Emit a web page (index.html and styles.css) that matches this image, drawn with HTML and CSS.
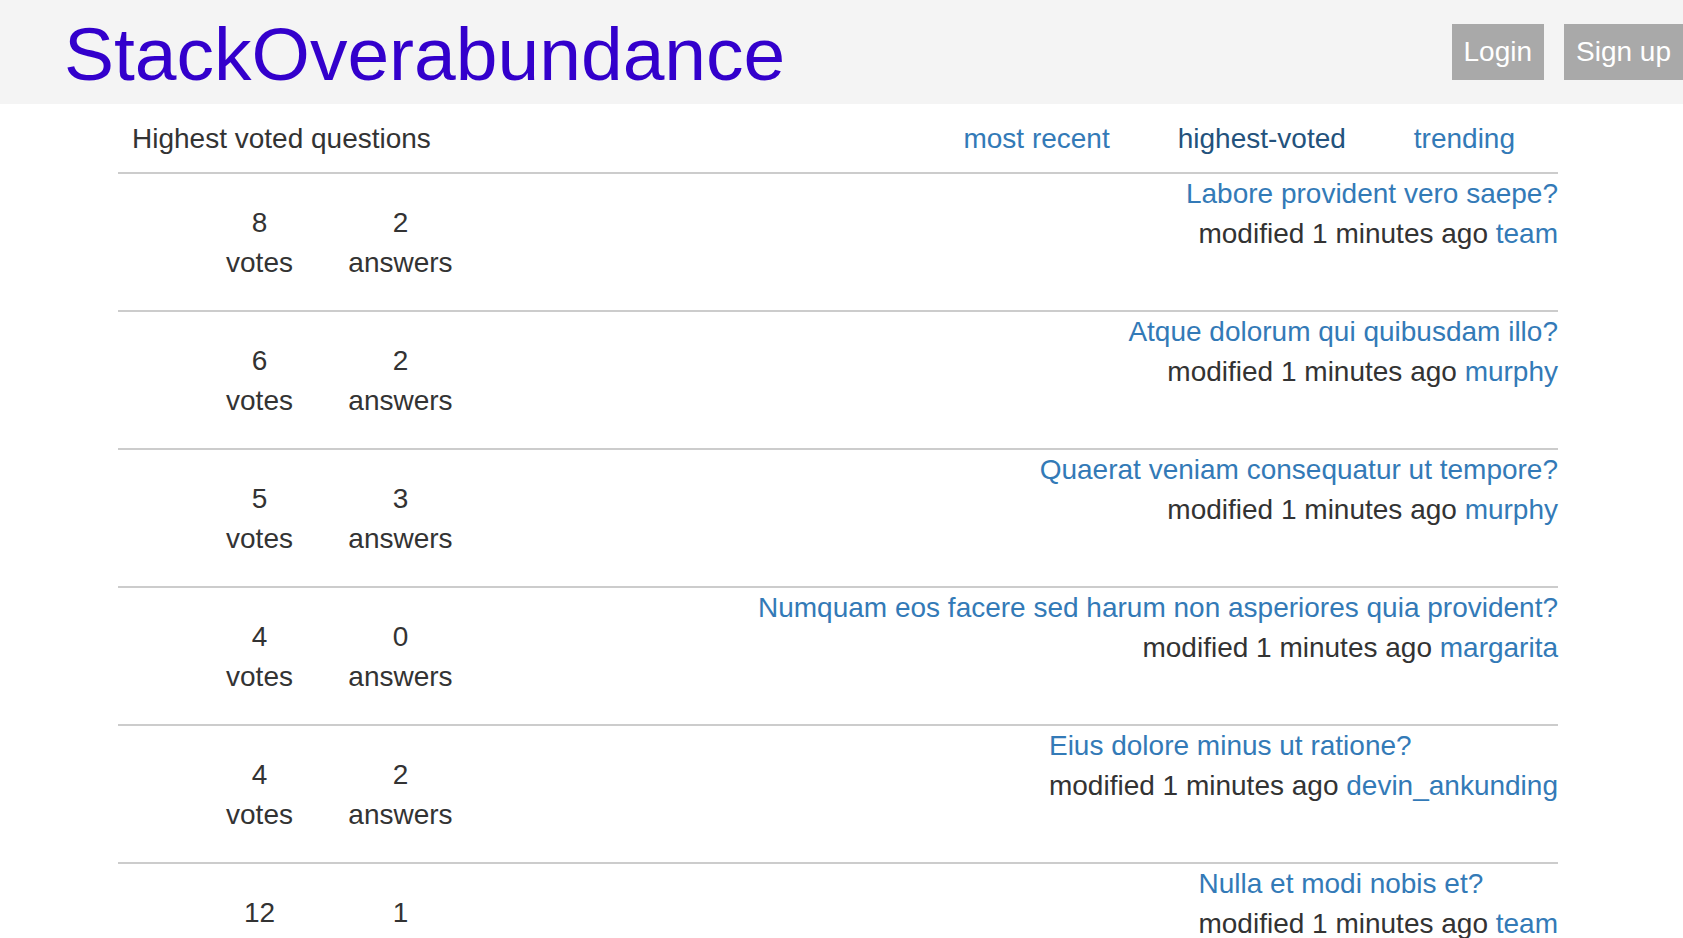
FILE: index.html
```html
<!DOCTYPE html>
<html lang="en">
<head>
<meta charset="utf-8">
<title>StackOverabundance</title>
<link rel="stylesheet" href="styles.css">
</head>
<body>
<header class="topbar">
  <a class="logo" href="#">StackOverabundance</a>
  <div class="auth">
    <a class="btn" href="#">Login</a>
    <a class="btn" href="#">Sign up</a>
  </div>
</header>
<main class="container">
  <div class="subnav">
    <h2 class="subnav-title">Highest voted questions</h2>
    <nav class="tabs">
      <a class="tab" href="#">most recent</a>
      <a class="tab tab-active" href="#">highest-voted</a>
      <a class="tab" href="#">trending</a>
    </nav>
  </div>

  <div class="question">
    <div class="stats">
      <div class="stat"><div>8</div><div>votes</div></div>
      <div class="stat"><div>2</div><div>answers</div></div>
    </div>
    <div class="summary">
      <a class="q-title" href="#">Labore provident vero saepe?</a>
      <div class="meta">modified 1 minutes ago <a href="#">team</a></div>
    </div>
  </div>

  <div class="question">
    <div class="stats">
      <div class="stat"><div>6</div><div>votes</div></div>
      <div class="stat"><div>2</div><div>answers</div></div>
    </div>
    <div class="summary">
      <a class="q-title" href="#">Atque dolorum qui quibusdam illo?</a>
      <div class="meta">modified 1 minutes ago <a href="#">murphy</a></div>
    </div>
  </div>

  <div class="question">
    <div class="stats">
      <div class="stat"><div>5</div><div>votes</div></div>
      <div class="stat"><div>3</div><div>answers</div></div>
    </div>
    <div class="summary">
      <a class="q-title" href="#">Quaerat veniam consequatur ut tempore?</a>
      <div class="meta">modified 1 minutes ago <a href="#">murphy</a></div>
    </div>
  </div>

  <div class="question">
    <div class="stats">
      <div class="stat"><div>4</div><div>votes</div></div>
      <div class="stat"><div>0</div><div>answers</div></div>
    </div>
    <div class="summary">
      <a class="q-title" href="#">Numquam eos facere sed harum non asperiores quia provident?</a>
      <div class="meta">modified 1 minutes ago <a href="#">margarita</a></div>
    </div>
  </div>

  <div class="question">
    <div class="stats">
      <div class="stat"><div>4</div><div>votes</div></div>
      <div class="stat"><div>2</div><div>answers</div></div>
    </div>
    <div class="summary">
      <a class="q-title" href="#">Eius dolore minus ut ratione?</a>
      <div class="meta">modified 1 minutes ago <a href="#">devin_ankunding</a></div>
    </div>
  </div>

  <div class="question">
    <div class="stats">
      <div class="stat"><div>12</div><div>votes</div></div>
      <div class="stat"><div>1</div><div>answers</div></div>
    </div>
    <div class="summary">
      <a class="q-title" href="#">Nulla et modi nobis et?</a>
      <div class="meta">modified 1 minutes ago <a href="#">team</a></div>
    </div>
  </div>
</main>
</body>
</html>
```
FILE: styles.css
```css
html, body {
  margin: 0;
  padding: 0;
  background: #fff;
}
body {
  font-family: "Liberation Sans", Arial, Helvetica, sans-serif;
  font-size: 28px;
  line-height: 40px;
  color: #333;
  overflow: hidden;
}
a {
  color: #337ab7;
  text-decoration: none;
}

.topbar {
  display: flex;
  align-items: flex-start;
  height: 104px;
  background: #f4f4f4;
}
.logo {
  margin: 17px 0 0 64px;
  font-size: 75px;
  line-height: 74px;
  color: #3300cc;
}
.auth {
  margin-left: auto;
  margin-top: 24px;
  display: flex;
  gap: 20px;
}
.btn {
  display: block;
  padding: 8px 12px;
  line-height: 40px;
  background: #a9a9a9;
  color: #fff;
}

.container {
  width: 1440px;
  margin-left: 118px;
}
.subnav {
  display: flex;
  align-items: flex-start;
  padding: 15px 0 13px 14px;
  border-bottom: 2px solid #ccc;
}
.subnav-title {
  flex: 1;
  margin: 0;
  font-size: 28px;
  line-height: 40px;
  font-weight: normal;
}
.tabs {
  display: flex;
  gap: 68px;
  margin-right: 43px;
}
.tab-active {
  color: #23527c;
}

.question {
  display: flex;
  align-items: flex-start;
  height: 136px;
  border-bottom: 2px solid #ccc;
}
.stats {
  display: flex;
  margin-left: 71px;
  padding-top: 29px;
}
.stat {
  width: 141px;
  text-align: center;
}
.summary {
  margin-left: auto;
  display: flex;
  flex-direction: column;
}
.q-title {
  display: block;
  text-align: left;
}
.meta {
  text-align: right;
}
```
